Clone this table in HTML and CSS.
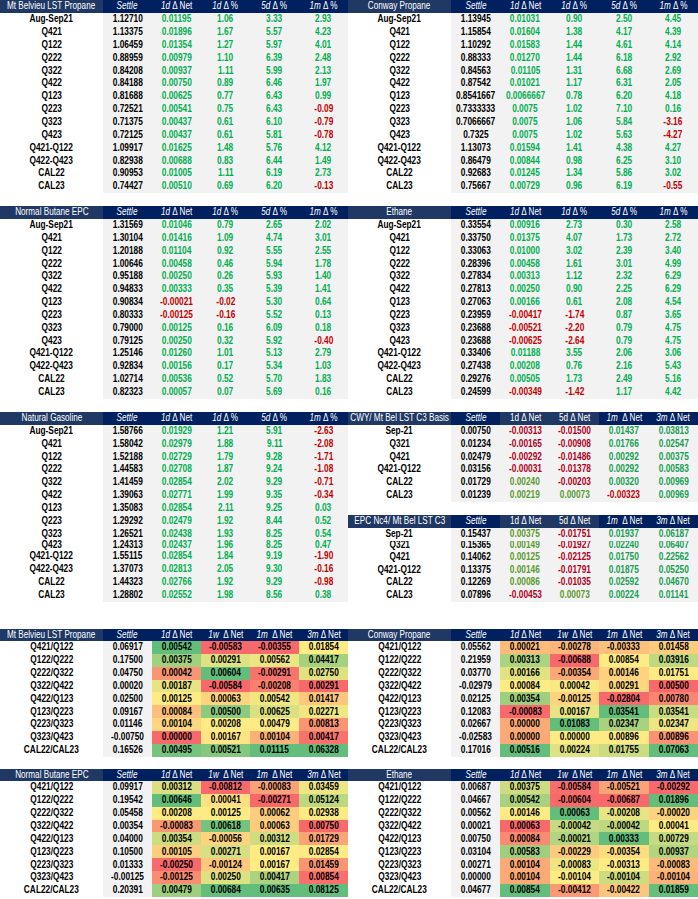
FILE: index.html
```html
<!DOCTYPE html>
<html lang="en">
<head>
<meta charset="utf-8">
<title>NGL Settles</title>
<link rel="stylesheet" href="styles.css">
</head>
<body>
<div class="board">
  <section class="pair">
    <div class="tbl" data-t="mbProp"></div>
    <div class="tbl" data-t="cwProp"></div>
  </section>
  <section class="pair">
    <div class="tbl" data-t="nbEpc"></div>
    <div class="tbl" data-t="ethane"></div>
  </section>
  <section class="pair pair-last">
    <div class="tbl" data-t="natgas"></div>
    <div class="stack">
      <div class="tbl" data-t="cwyBasis"></div>
      <div class="tbl" data-t="epcBasis"></div>
    </div>
  </section>
  <section class="pair pair-heat">
    <div class="tbl" data-t="hMb"></div>
    <div class="tbl" data-t="hCw"></div>
  </section>
  <section class="pair pair-heat">
    <div class="tbl" data-t="hNb"></div>
    <div class="tbl" data-t="hEt"></div>
  </section>
</div>
<script src="script.js"></script>
</body>
</html>
```

FILE: styles.css
```css
body {
  margin: 0;
  background: #ffffff;
  font-family: "Liberation Sans", Arial, sans-serif;
}

.board {
  width: 698px;
}

.pair {
  display: grid;
  grid-template-columns: 348px 350px;
  margin-bottom: 13px;
}

.pair.pair-last {
  margin-bottom: 27px;
}

.pair.pair-heat {
  margin-bottom: 12px;
}

.stack {
  display: flex;
  flex-direction: column;
  gap: 13px;
}

.tbl {
  display: grid;
  grid-template-columns: 103px repeat(5, 1fr);
  align-content: start;
}

.cell {
  height: 12.85px;
  display: flex;
  align-items: center;
  justify-content: center;
  white-space: nowrap;
  overflow: hidden;
  line-height: 1;
  font-size: 10.4px;
  font-weight: bold;
  color: #000000;
}

/* narrow, Calibri-like letterforms */
.tx {
  display: inline-block;
  flex: none;
  transform: scaleX(0.8);
  white-space: nowrap;
}

.cell.sq {
  height: 10px;
}

.hd {
  height: 13px;
  background: #002060;
  color: #ffffff;
  font-weight: normal;
  font-size: 10.2px;
}

.hd.hlab,
.hd.alt {
  background: #1f3864;
}

.hd i {
  font-style: italic;
}

.lab {
  background: #ffffff;
}

.num {
  background: #f2f2f2;
}

.g { color: #00b050; }
.r { color: #c00000; }
.go { color: #5a9a2e; }
.r2 { color: #b0001c; }
.gt { color: #17a052; }

.heat .hd {
  height: 12px;
}

.heat .cell:not(.hd) {
  height: 12.9px;
}

.heat .hv {
  color: #000000;
}
```

FILE: script.js
```js
const HEADS = {
  std: [
    '<i>Settle</i>',
    '<i>1d</i>&nbsp;Δ Net',
    '<i>1d</i>&nbsp;Δ %',
    '<i>5d</i>&nbsp;Δ %',
    '<i>1m</i>&nbsp;Δ %'
  ],
  basis: [
    '<i>Settle</i>',
    '1d&nbsp;Δ Net',
    '5d&nbsp;Δ Net',
    '<i>1m</i>&nbsp;&nbsp;Δ Net',
    '<i>3m</i>&nbsp;Δ Net'
  ],
  heat: [
    '<i>Settle</i>',
    '<i>1d</i>&nbsp;Δ Net',
    '<i>1w</i>&nbsp;&nbsp;Δ Net',
    '<i>1m</i>&nbsp;&nbsp;Δ Net',
    '<i>3m</i>&nbsp;Δ Net'
  ]
};

const ALT = { basis: [false, true, true, false, false] };

const DATA = {
  mbProp: { title: 'Mt Belvieu LST Propane', type: 'std', rows: `
Aug-Sep21 1.12710 0.01195 1.06 3.33 2.93
Q421 1.13375 0.01896 1.67 5.57 4.23
Q122 1.06459 0.01354 1.27 5.97 4.01
Q222 0.88959 0.00979 1.10 6.39 2.48
Q322 0.84208 0.00937 1.11 5.99 2.13
Q422 0.84188 0.00750 0.89 6.46 1.97
Q123 0.81688 0.00625 0.77 6.43 0.99
Q223 0.72521 0.00541 0.75 6.43 -0.09
Q323 0.71375 0.00437 0.61 6.10 -0.79
Q423 0.72125 0.00437 0.61 5.81 -0.78
Q421-Q122 1.09917 0.01625 1.48 5.76 4.12
Q422-Q423 0.82938 0.00688 0.83 6.44 1.49
CAL22 0.90953 0.01005 1.11 6.19 2.73
CAL23 0.74427 0.00510 0.69 6.20 -0.13` },
  cwProp: { title: 'Conway Propane', type: 'std', rows: `
Aug-Sep21 1.13945 0.01031 0.90 2.50 4.45
Q421 1.15854 0.01604 1.38 4.17 4.39
Q122 1.10292 0.01583 1.44 4.61 4.14
Q222 0.88333 0.01270 1.44 6.18 2.92
Q322 0.84563 0.01105 1.31 6.68 2.69
Q422 0.87542 0.01021 1.17 6.31 2.05
Q123 0.8541667 0.0066667 0.78 6.20 4.18
Q223 0.7333333 0.0075 1.02 7.10 0.16
Q323 0.7066667 0.0075 1.06 5.84 -3.16
Q423 0.7325 0.0075 1.02 5.63 -4.27
Q421-Q122 1.13073 0.01594 1.41 4.38 4.27
Q422-Q423 0.86479 0.00844 0.98 6.25 3.10
CAL22 0.92683 0.01245 1.34 5.86 3.02
CAL23 0.75667 0.00729 0.96 6.19 -0.55` },
  nbEpc: { title: 'Normal Butane EPC', type: 'std', rows: `
Aug-Sep21 1.31569 0.01046 0.79 2.65 2.02
Q421 1.30104 0.01416 1.09 4.74 3.01
Q122 1.20188 0.01104 0.92 5.55 2.55
Q222 1.00646 0.00458 0.46 5.94 1.78
Q322 0.95188 0.00250 0.26 5.93 1.40
Q422 0.94833 0.00333 0.35 5.39 1.41
Q123 0.90834 -0.00021 -0.02 5.30 0.64
Q223 0.80333 -0.00125 -0.16 5.52 0.13
Q323 0.79000 0.00125 0.16 6.09 0.18
Q423 0.79125 0.00250 0.32 5.92 -0.40
Q421-Q122 1.25146 0.01260 1.01 5.13 2.79
Q422-Q423 0.92834 0.00156 0.17 5.34 1.03
CAL22 1.02714 0.00536 0.52 5.70 1.83
CAL23 0.82323 0.00057 0.07 5.69 0.16` },
  ethane: { title: 'Ethane', type: 'std', rows: `
Aug-Sep21 0.33554 0.00916 2.73 0.30 2.58
Q421 0.33750 0.01375 4.07 1.73 2.72
Q122 0.33063 0.01000 3.02 2.39 3.40
Q222 0.28396 0.00458 1.61 3.01 4.99
Q322 0.27834 0.00313 1.12 2.32 6.29
Q422 0.27813 0.00250 0.90 2.25 6.29
Q123 0.27063 0.00166 0.61 2.08 4.54
Q223 0.23959 -0.00417 -1.74 0.87 3.65
Q323 0.23688 -0.00521 -2.20 0.79 4.75
Q423 0.23688 -0.00625 -2.64 0.79 4.75
Q421-Q122 0.33406 0.01188 3.55 2.06 3.06
Q422-Q423 0.27438 0.00208 0.76 2.16 5.43
CAL22 0.29276 0.00505 1.73 2.49 5.16
CAL23 0.24599 -0.00349 -1.42 1.17 4.42` },
  natgas: { title: 'Natural Gasoline', type: 'std', sq: 9, rows: `
Aug-Sep21 1.58766 0.01929 1.21 5.91 -2.63
Q421 1.58042 0.02979 1.88 9.11 -2.08
Q122 1.52188 0.02729 1.79 9.28 -1.71
Q222 1.44583 0.02708 1.87 9.24 -1.08
Q322 1.41459 0.02854 2.02 9.29 -0.71
Q422 1.39063 0.02771 1.99 9.35 -0.34
Q123 1.35083 0.02854 2.11 9.25 0.03
Q223 1.29292 0.02479 1.92 8.44 0.52
Q323 1.26521 0.02438 1.93 8.25 0.54
Q423 1.24313 0.02437 1.96 8.25 0.47
Q421-Q122 1.55115 0.02854 1.84 9.19 -1.90
Q422-Q423 1.37073 0.02813 2.05 9.30 -0.16
CAL22 1.44323 0.02766 1.92 9.29 -0.98
CAL23 1.28802 0.02552 1.98 8.56 0.38` },
  cwyBasis: { title: 'CWY/ Mt Bel LST C3 Basis', type: 'basis', rows: `
Sep-21 0.00750 -0.00313 -0.01500 0.01437 0.03813
Q321 0.01234 -0.00165 -0.00908 0.01766 0.02547
Q421 0.02479 -0.00292 -0.01486 0.00292 0.00375
Q421-Q122 0.03156 -0.00031 -0.01378 0.00292 0.00583
CAL22 0.01729 0.00240 -0.00203 0.00320 0.00969
CAL23 0.01239 0.00219 0.00073 -0.00323 0.00969` },
  epcBasis: { title: 'EPC Nc4/ Mt Bel LST C3', type: 'basis', sq: 1, rows: `
Sep-21 0.15437 0.00375 -0.01751 0.01937 0.06187
Q321 0.15365 0.00149 -0.01927 0.02240 0.06407
Q421 0.14062 0.00125 -0.02125 0.01750 0.22562
Q421-Q122 0.13375 0.00146 -0.01791 0.01875 0.05250
CAL22 0.12269 0.00086 -0.01035 0.02592 0.04670
CAL23 0.07896 -0.00453 0.00073 0.00224 0.01141` },
  hMb: { title: 'Mt Belvieu LST Propane', type: 'heat', rows: `
Q421/Q122 0.06917 0.00542 -0.00583 -0.00355 0.01854
Q122/Q222 0.17500 0.00375 0.00291 0.00562 0.04417
Q222/Q322 0.04750 0.00042 0.00604 -0.00291 0.02750
Q322/Q422 0.00020 0.00187 -0.00584 -0.00208 0.00291
Q422/Q123 0.02500 0.00125 0.00063 0.00542 0.01417
Q123/Q223 0.09167 0.00084 0.00500 0.00625 0.02271
Q223/Q323 0.01146 0.00104 0.00208 0.00479 0.00813
Q323/Q423 -0.00750 0.00000 0.00167 0.00104 0.00417
CAL22/CAL23 0.16526 0.00495 0.00521 0.01115 0.06328` },
  hCw: { title: 'Conway Propane', type: 'heat', rows: `
Q421/Q122 0.05562 0.00021 -0.00278 -0.00333 0.01458
Q122/Q222 0.21959 0.00313 -0.00688 0.00854 0.03916
Q222/Q322 0.03770 0.00166 -0.00354 0.00146 0.01751
Q322/Q422 -0.02979 0.00084 0.00042 0.00291 0.00500
Q422/Q123 0.02125 0.00354 -0.00125 -0.02804 0.00780
Q123/Q223 0.12083 -0.00083 0.00167 0.03541 0.03541
Q223/Q323 0.02667 0.00000 0.01083 0.02347 0.02347
Q323/Q423 -0.02583 0.00000 0.00000 0.00896 0.00896
CAL22/CAL23 0.17016 0.00516 0.00224 0.01755 0.07063` },
  hNb: { title: 'Normal Butane EPC', type: 'heat', rows: `
Q421/Q122 0.09917 0.00312 -0.00812 -0.00083 0.03459
Q122/Q222 0.19542 0.00646 0.00041 -0.00271 0.05124
Q222/Q322 0.05458 0.00208 0.00125 0.00062 0.02938
Q322/Q422 0.00354 -0.00083 0.00618 0.00063 0.00750
Q422/Q123 0.04000 0.00354 -0.00056 0.00312 0.01729
Q123/Q223 0.10500 0.00105 0.00271 0.00167 0.02854
Q223/Q323 0.01333 -0.00250 -0.00124 0.00167 0.01459
Q323/Q423 -0.00125 -0.00125 0.00250 0.00417 0.00854
CAL22/CAL23 0.20391 0.00479 0.00684 0.00635 0.08125` },
  hEt: { title: 'Ethane', type: 'heat', rows: `
Q421/Q122 0.00687 0.00375 -0.00584 -0.00521 -0.00292
Q122/Q222 0.04667 0.00542 -0.00604 -0.00687 0.01896
Q222/Q322 0.00562 0.00146 0.00063 -0.00208 -0.00020
Q322/Q422 0.00021 0.00063 -0.00042 -0.00042 0.00041
Q422/Q123 0.00750 0.00084 -0.00021 0.00333 0.00729
Q123/Q223 0.03104 0.00583 -0.00229 -0.00354 0.00937
Q223/Q323 0.00271 0.00104 -0.00083 -0.00313 -0.00083
Q323/Q423 0.00000 0.00104 -0.00104 -0.00104 -0.00104
CAL22/CAL23 0.04677 0.00854 -0.00412 -0.00422 0.01859` }
};

const RED = [248, 105, 107];
const YEL = [255, 235, 132];
const GRN = [99, 190, 123];

function mix(a, b, t) {
  t = Math.max(0, Math.min(1, isFinite(t) ? t : 0));
  return 'rgb(' + a.map((x, i) => Math.round(x + (b[i] - x) * t)).join(',') + ')';
}

function percentile(sorted, p) {
  const pos = (sorted.length - 1) * p;
  const lo = Math.floor(pos);
  const hi = Math.ceil(pos);
  return sorted[lo] + (sorted[hi] - sorted[lo]) * (pos - lo);
}

function scaleFor(values) {
  const s = values.slice().sort((a, b) => a - b);
  const min = s[0];
  const max = s[s.length - 1];
  const mid = percentile(s, 0.5);
  return function (v) {
    if (v <= mid) {
      return mid === min ? mix(YEL, YEL, 0) : mix(RED, YEL, (v - min) / (mid - min));
    }
    return max === mid ? mix(YEL, YEL, 0) : mix(YEL, GRN, (v - mid) / (max - mid));
  };
}

function cell(cls, html) {
  const e = document.createElement('div');
  e.className = 'cell ' + cls;
  const s = document.createElement('span');
  s.className = 'tx';
  s.innerHTML = html;
  e.appendChild(s);
  return e;
}

function build(node, t) {
  node.classList.add(t.type);
  const alt = ALT[t.type] || [];
  node.appendChild(cell('hd hlab', t.title));
  HEADS[t.type].forEach((h, i) => {
    node.appendChild(cell('hd' + (alt[i] ? ' alt' : ''), h));
  });
  const rows = t.rows.trim().split('\n').map(l => l.trim().split(/\s+/));
  const scales = [];
  if (t.type === 'heat') {
    for (let c = 2; c <= 5; c++) {
      scales[c] = scaleFor(rows.map(r => parseFloat(r[c])));
    }
  }
  rows.forEach((r, i) => {
    const sq = t.sq === i ? ' sq' : '';
    node.appendChild(cell('lab' + sq, r[0]));
    node.appendChild(cell('num' + sq, r[1]));
    for (let c = 2; c <= 5; c++) {
      const v = parseFloat(r[c]);
      let cls;
      if (t.type === 'heat') {
        const e = cell('num hv' + sq, r[c]);
        e.style.background = scales[c](v);
        node.appendChild(e);
        continue;
      } else if (t.type === 'basis') {
        cls = c <= 3 ? (v < 0 ? 'r2' : 'go') : (v < 0 ? 'r' : 'gt');
      } else {
        cls = v < 0 ? 'r' : 'g';
      }
      node.appendChild(cell('num ' + cls + sq, r[c]));
    }
  });
}

document.querySelectorAll('.tbl[data-t]').forEach(node => {
  const t = DATA[node.getAttribute('data-t')];
  if (t) build(node, t);
});
```
